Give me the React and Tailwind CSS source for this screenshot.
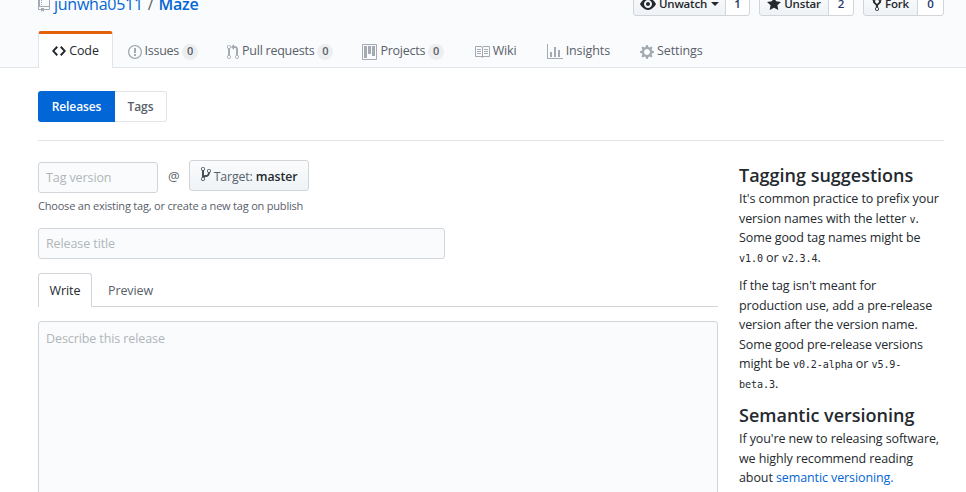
import React from "react";

const font = "font-['Open_Sans','Noto_Sans',sans-serif]";

function Icon({ w = 16, d, className = "" }) {
  return (
    <svg viewBox={`0 0 ${w} 16`} width={w} height={16} fill="currentColor" className={`shrink-0 ${className}`}>
      <path fillRule="evenodd" d={d} />
    </svg>
  );
}

const paths = {
  repo: "M4 9H3V8h1v1zm0-3H3v1h1V6zm0-2H3v1h1V4zm0-2H3v1h1V2zm8-1v12c0 .55-.45 1-1 1H6v2l-1.5-1.5L3 16v-2H1c-.55 0-1-.45-1-1V1c0-.55.45-1 1-1h10c.55 0 1 .45 1 1zm-1 10H1v2h2v-1h3v1h5v-2zm0-10H2v9h9V1z",
  code: "M9.5 3L8 4.5 11.5 8 8 11.5 9.5 13 14 8 9.5 3zm-5 0L0 8l4.5 5L6 11.5 2.5 8 6 4.5 4.5 3z",
  issue: "M7 2.3c3.14 0 5.7 2.56 5.7 5.7s-2.56 5.7-5.7 5.7A5.71 5.71 0 0 1 1.3 8c0-3.14 2.56-5.7 5.7-5.7zM7 1C3.14 1 0 4.14 0 8s3.14 7 7 7 7-3.14 7-7-3.14-7-7-7zm1 3H6v5h2V4zm0 6H6v2h2v-2z",
  pull: "M11 11.28V5c-.03-.78-.34-1.47-.94-2.06C9.46 2.35 8.78 2.03 8 2H7V0L4 3l3 3V4h1c.27.02.48.11.69.31.21.2.3.42.31.69v6.28A1.993 1.993 0 0 0 10 15a1.993 1.993 0 0 0 1-3.72zm-1 2.92c-.66 0-1.2-.55-1.2-1.2 0-.65.55-1.2 1.2-1.2.65 0 1.2.55 1.2 1.2 0 .65-.55 1.2-1.2 1.2zM4 3c0-1.11-.89-2-2-2a1.993 1.993 0 0 0-1 3.72v6.56A1.993 1.993 0 0 0 2 15a1.993 1.993 0 0 0 1-3.72V4.72c.59-.34 1-.98 1-1.72zm-.8 10c0 .66-.55 1.2-1.2 1.2-.65 0-1.2-.55-1.2-1.2 0-.65.55-1.2 1.2-1.2.65 0 1.2.55 1.2 1.2zM2 4.2C1.34 4.2.8 3.65.8 3c0-.65.55-1.2 1.2-1.2.65 0 1.2.55 1.2 1.2 0 .65-.55 1.2-1.2 1.2z",
  project: "M10 12h3V2h-3v10zm-4-2h3V2H6v8zm-4 4h3V2H2v12zm-1 1h13V1H1v14zM14 0H1a1 1 0 0 0-1 1v14a1 1 0 0 0 1 1h13a1 1 0 0 0 1-1V1a1 1 0 0 0-1-1z",
  book: "M3 5h4v1H3V5zm0 3h4V7H3v1zm0 2h4V9H3v1zm11-5h-4v1h4V5zm0 2h-4v1h4V7zm0 2h-4v1h4V9zm2-6v9c0 .55-.45 1-1 1H9.5l-1 1-1-1H2c-.55 0-1-.45-1-1V3c0-.55.45-1 1-1h5.5l1 1 1-1H15c.55 0 1 .45 1 1zm-8 .5L7.5 3H2v9h6V3.5zm7-.5H9.5l-.5.5V12h6V3z",
  graph: "M16 14v1H0V0h1v14h15zM5 13H3V8h2v5zm4 0H7V3h2v10zm4 0h-2V6h2v7z",
  gear: "M14 8.77v-1.6l-1.94-.64-.45-1.09.88-1.84-1.13-1.13-1.81.91-1.09-.45-.69-1.92h-1.6l-.63 1.94-1.11.45-1.84-.88-1.13 1.13.91 1.81-.45 1.09L0 7.23v1.59l1.94.64.45 1.09-.88 1.84 1.13 1.13 1.81-.91 1.09.45.69 1.92h1.59l.63-1.94 1.11-.45 1.84.88 1.13-1.13-.92-1.81.47-1.09L14 8.75v.02zM7 11c-1.66 0-3-1.34-3-3s1.34-3 3-3 3 1.34 3 3-1.34 3-3 3z",
  eye: "M8.06 2C3 2 0 8 0 8s3 6 8.06 6C13 14 16 8 16 8s-3-6-7.94-6zM8 12c-2.2 0-4-1.78-4-4 0-2.2 1.8-4 4-4 2.22 0 4 1.8 4 4 0 2.22-1.78 4-4 4zm2-4c0 1.11-.89 2-2 2-1.11 0-2-.89-2-2 0-1.11.89-2 2-2 1.11 0 2 .89 2 2z",
  star: "M14 6l-4.9-.64L7 1 4.9 5.36 0 6l3.6 3.26L2.67 14 7 11.67 11.33 14l-.93-4.74L14 6z",
  fork: "M8 1a1.993 1.993 0 0 0-1 3.72V6L5 8 3 6V4.72A1.993 1.993 0 0 0 2 1a1.993 1.993 0 0 0-1 3.72V6.5l3 3v1.78A1.993 1.993 0 0 0 5 15a1.993 1.993 0 0 0 1-3.72V9.5l3-3V4.72A1.993 1.993 0 0 0 8 1zM2 4.2C1.34 4.2.8 3.65.8 3c0-.65.55-1.2 1.2-1.2.65 0 1.2.55 1.2 1.2 0 .65-.55 1.2-1.2 1.2zm3 10c-.66 0-1.2-.55-1.2-1.2 0-.65.55-1.2 1.2-1.2.65 0 1.2.55 1.2 1.2 0 .65-.55 1.2-1.2 1.2zm3-10c-.66 0-1.2-.55-1.2-1.2 0-.65.55-1.2 1.2-1.2.65 0 1.2.55 1.2 1.2 0 .65-.55 1.2-1.2 1.2z",
  branch: "M10 5c0-1.11-.89-2-2-2a1.993 1.993 0 0 0-1 3.72v.3c-.02.52-.23.98-.63 1.38-.4.4-.86.61-1.38.63-.83.02-1.48.16-2 .45V4.72a1.993 1.993 0 0 0-1-3.72C.88 1 0 1.89 0 3a2 2 0 0 0 1 1.72v6.56c-.59.35-1 .99-1 1.72 0 1.11.89 2 2 2 1.11 0 2-.89 2-2 0-.53-.2-1-.53-1.38.09-.06.48-.41.59-.47.25-.11.56-.17.94-.17 1.05-.05 1.95-.45 2.75-1.25S8.95 7.77 9 6.73h-.02C9.59 6.37 10 5.73 10 5zM2 1.8c.66 0 1.2.55 1.2 1.2 0 .65-.55 1.2-1.2 1.2C1.35 4.2.8 3.65.8 3c0-.65.55-1.2 1.2-1.2zm0 12.41c-.66 0-1.2-.55-1.2-1.2 0-.65.55-1.2 1.2-1.2.65 0 1.2.55 1.2 1.2 0 .65-.55 1.2-1.2 1.2zm6-8c-.66 0-1.2-.55-1.2-1.2 0-.65.55-1.2 1.2-1.2.65 0 1.2.55 1.2 1.2 0 .65-.55 1.2-1.2 1.2z",
};

function ActionButton({ icon, iconW, label, count, caret, labelW, countW }) {
  return (
    <div className="flex h-[24px] text-[11.5px] font-semibold tracking-[-0.2px] text-[#24292e]">
      <div className={`flex items-center justify-center gap-[3px] rounded-l-[3px] border border-[#d1d5da] bg-gradient-to-b from-[#fafbfc] to-[#eff3f6] ${labelW}`}>
        <Icon w={iconW} d={icon} />
        <span>{label}</span>
        {caret && <span className="ml-[1px] h-0 w-0 border-x-[4px] border-t-[4px] border-x-transparent border-t-[#24292e]" />}
      </div>
      <div className={`-ml-px flex items-center justify-center rounded-r-[3px] border border-[#d1d5da] bg-white text-[#253a6b] ${countW}`}>
        {count}
      </div>
    </div>
  );
}

function Tab({ icon, iconW, label, count, active }) {
  if (active) {
    return (
      <div className="-mb-px flex h-[37px] w-[75px] items-center justify-center gap-[3px] rounded-t-[3px] border-x border-[#e1e4e8] border-t-[3px] border-t-[#e36209] bg-white text-[#24292e]">
        <Icon w={iconW} d={icon} />
        <span>{label}</span>
      </div>
    );
  }
  const spacing = count === undefined ? "px-[15px] tracking-[-0.1px]" : "px-[14.5px] tracking-[-0.25px]";
  return (
    <div className={`flex h-[37px] items-center gap-[3px] pt-[6px] text-[#586069] ${spacing}`}>
      <Icon w={iconW} d={icon} className="text-[#a3aab1]" />
      <span>{label}</span>
      {count !== undefined && (
        <span className="flex h-[16px] w-[16px] items-center justify-center rounded-full bg-[#1b1f230f] text-[11px] font-semibold">
          {count}
        </span>
      )}
    </div>
  );
}

const mono = "font-['DejaVu_Sans_Mono','Liberation_Mono',monospace] text-[10.1px] leading-none";

export default function App() {
  return (
    <div className={`h-[492px] overflow-hidden bg-white text-[12.5px] tracking-[-0.1px] text-[#24292e] ${font}`}>
      {/* repo head */}
      <header className="flex h-[68px] flex-col justify-between border-b border-[#e1e4e8] bg-[#fafbfc]">
        <div className="-mt-[8px] flex h-[24px] items-center justify-between pl-[38px] pr-[22px]">
          <div className="flex items-center text-[16px] tracking-[-0.25px] text-[#0366d6]">
            <Icon w={12} d={paths.repo} className="mr-[4px] text-[#a3aab1]" />
            <span>junwha0511</span>
            <span className="mx-[5px] text-[#586069]">/</span>
            <span className="font-semibold">Maze</span>
          </div>
          <div className="flex gap-[9px]">
            <ActionButton icon={paths.eye} iconW={16} label="Unwatch" caret count="1" labelW="w-[93px]" countW="w-[25px]" />
            <ActionButton icon={paths.star} iconW={14} label="Unstar" count="2" labelW="w-[70px]" countW="w-[26px]" />
            <ActionButton icon={paths.fork} iconW={10} label="Fork" count="0" labelW="w-[55px]" countW="w-[27px]" />
          </div>
        </div>
        <nav className="flex items-end pl-[38px]">
          <Tab active icon={paths.code} iconW={14} label="Code" />
          <Tab icon={paths.issue} iconW={14} label="Issues" count="0" />
          <Tab icon={paths.pull} iconW={12} label="Pull requests" count="0" />
          <Tab icon={paths.project} iconW={15} label="Projects" count="0" />
          <Tab icon={paths.book} iconW={16} label="Wiki" />
          <Tab icon={paths.graph} iconW={16} label="Insights" />
          <Tab icon={paths.gear} iconW={14} label="Settings" />
        </nav>
      </header>

      <main className="px-[38px] pr-[22px]">
        <div className="mt-[23px] flex h-[31px] text-[12px] font-semibold">
          <div className="flex w-[77px] items-center justify-center rounded-l-[3px] bg-[#0366d6] text-white">Releases</div>
          <div className="flex w-[52px] items-center justify-center rounded-r-[3px] border border-l-0 border-[#e1e4e8] text-[#586069]">Tags</div>
        </div>
        <div className="mt-[18px] border-t border-[#e1e4e8]" />

        <div className="mt-[19px] flex gap-[21px]">
          {/* form */}
          <div className="w-[680px] shrink-0">
            <div className="flex items-start">
              <div className="mt-[2px] flex h-[31px] w-[120px] items-center rounded-[3px] border border-[#d1d5da] bg-[#fafbfc] px-[7px] pt-[2px] text-[#b0b5ba]">Tag version</div>
              <span className="ml-[10px] mt-[7px] w-[21px] text-[13px] text-[#586069]">@</span>
              <div className="flex h-[31px] w-[120px] items-center justify-center gap-[3px] rounded-[3px] border border-[#d1d5da] bg-gradient-to-b from-[#fafbfc] to-[#eff3f6] text-[12.3px] text-[#586069]">
                <Icon w={10} d={paths.branch} className="mb-[3px] text-[#444d56]" />
                <span className="pt-[3px]">Target: <b className="font-semibold text-[#24292e]">master</b></span>
              </div>
            </div>
            <p className="mt-[5px] text-[11px] leading-[16px] tracking-[-0.2px] text-[#586069]">Choose an existing tag, or create a new tag on publish</p>
            <div className="mt-[14px] flex h-[31px] w-[407px] items-center rounded-[3px] border border-[#d1d5da] bg-[#fafbfc] px-[7px] pt-[2px] text-[#b0b5ba]">Release title</div>

            <div className="mt-[14px] flex h-[34px] border-b border-[#d1d5da] pt-[1px]">
              <div className="-mb-px -mt-[1px] flex w-[54px] items-center justify-center rounded-t-[3px] border border-b-0 border-[#d1d5da] bg-white pt-[1px]">Write</div>
              <div className="ml-[16px] flex items-center pt-[2px] text-[#586069]">Preview</div>
            </div>
            <div className="mt-[14px] h-[200px] rounded-[3px] border border-[#d1d5da] bg-[#fafbfc] px-[7px] pb-[6px] pt-[7px] leading-[20px] text-[#b0b5ba]">Describe this release</div>
          </div>

          {/* sidebar */}
          <aside className="mt-[2px] whitespace-nowrap leading-[19.5px] text-[#24292e]">
            <h3 className="text-[18px] font-semibold leading-[27px] tracking-normal">Tagging suggestions</h3>
            <p>
              It's common practice to prefix your<br />
              version names with the letter <code className={mono}>v</code>.<br />
              Some good tag names might be<br />
              <code className={mono}>v1.0</code> or <code className={mono}>v2.3.4</code>.
            </p>
            <p className="mt-[9px]">
              If the tag isn't meant for<br />
              production use, add a pre-release<br />
              version after the version name.<br />
              Some good pre-release versions<br />
              might be <code className={mono}>v0.2-alpha</code> or <code className={mono}>v5.9-</code><br />
              <code className={mono}>beta.3</code>.
            </p>
            <h3 className="mt-[9px] text-[18px] font-semibold leading-[27px] tracking-normal">Semantic versioning</h3>
            <p>
              If you're new to releasing software,<br />
              we highly recommend reading<br />
              about <span className="text-[#0366d6]">semantic versioning.</span>
            </p>
          </aside>
        </div>
      </main>
    </div>
  );
}
